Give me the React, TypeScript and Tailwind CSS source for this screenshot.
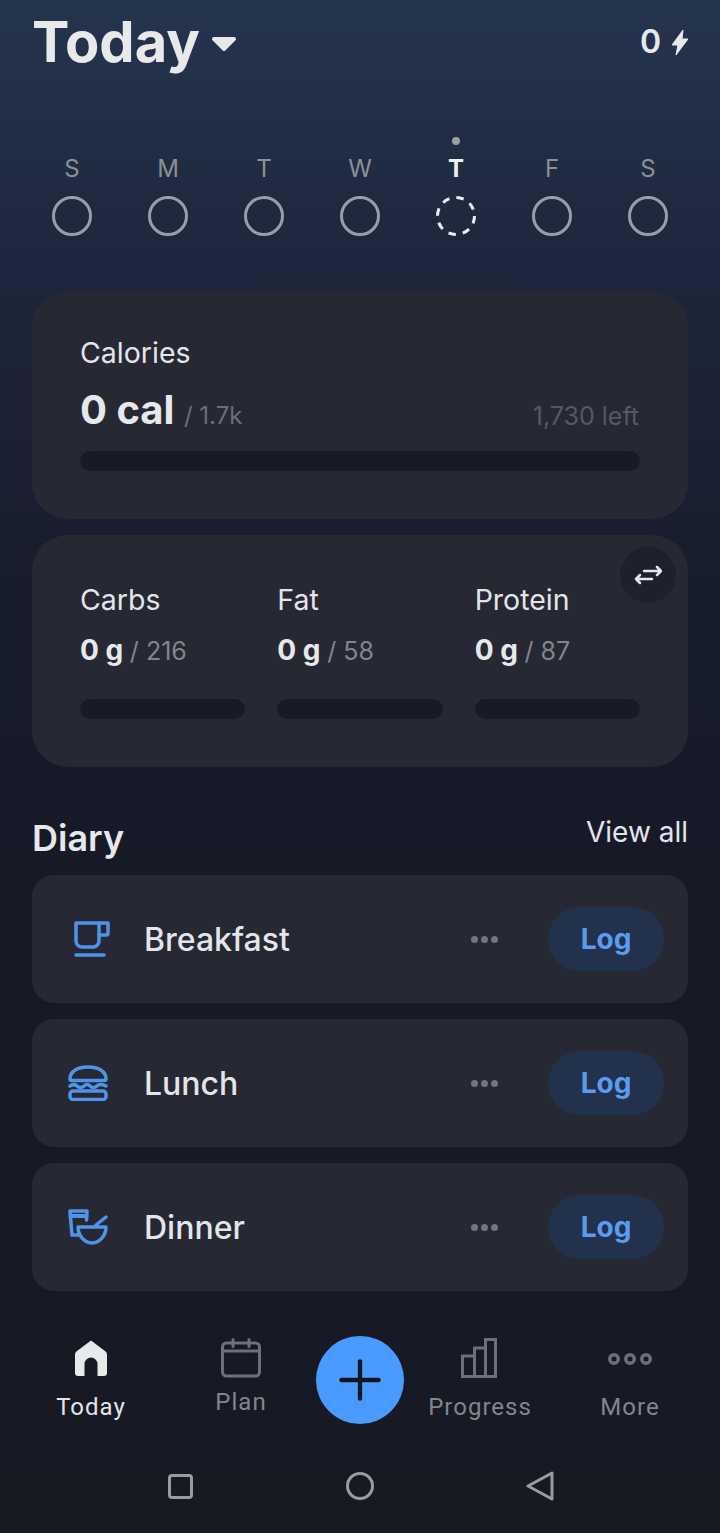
import { Plus } from "lucide-react"

const days = ["S", "M", "T", "W", "T", "F", "S"]
const macros = [
  { label: "Carbs", goal: "216" },
  { label: "Fat", goal: "58" },
  { label: "Protein", goal: "87" },
]

function CupIcon() {
  return (
    <svg width="36" height="36" viewBox="0 0 36 36" fill="none" stroke="#5094ea" strokeWidth="3.5" strokeLinecap="round" strokeLinejoin="round" className="ml-[6px]">
      <path d="M2 2H25V20a6 6 0 0 1-6 6H8a6 6 0 0 1-6-6Z" />
      <path d="M25 2h9V12a2 2 0 0 1-2 2h-7" />
      <path d="M2 34h28" />
    </svg>
  )
}

function BurgerIcon() {
  return (
    <svg width="40" height="36" viewBox="0 0 40 36" fill="none" stroke="#5094ea" strokeWidth="3.5" strokeLinecap="round" strokeLinejoin="round">
      <path d="M2 14C2 6 10 2 20 2S38 6 38 14c0 1-1 1.500-2 1.500H4c-1 0-2-.5-2-1.500Z" />
      <path d="M2 21c3-2 5-2 7 0s5 2 7 0 4-2 6 0 5 2 7 0 5-2 9 0" />
      <rect x="2" y="26" width="36" height="8.500" rx="3" />
    </svg>
  )
}

function DinnerIcon() {
  return (
    <svg width="40" height="36" viewBox="0 0 40 36" fill="none" stroke="#5094ea" strokeWidth="3.5" strokeLinecap="round" strokeLinejoin="round">
      <path d="M2 2H19l-.5 9M2 2l2 24h6" />
      <path d="M2.500 7h16" strokeWidth="4" />
      <path d="M10 18h28c0 9-7 16-14 16s-14-7-14-16Z" />
      <path d="M28 16l10-8" />
    </svg>
  )
}

function HomeIcon() {
  return (
    <svg width="34" height="36" viewBox="0 0 34 36" fill="#e8e9eb">
      <path d="M17 0.500 31 11a4 4 0 0 1 2 3.500V33a3 3 0 0 1-3 3h-6.500V24a6.500 6.500 0 0 0-13 0v12H4a3 3 0 0 1-3-3V14.500A4 4 0 0 1 3 11Z" />
    </svg>
  )
}

function CalendarIcon() {
  return (
    <svg width="40" height="40" viewBox="0 0 40 40" fill="none" stroke="#6e6f78" strokeWidth="3" strokeLinecap="round" strokeLinejoin="round">
      <rect x="1.500" y="5" width="37" height="33" rx="4" />
      <path d="M1.500 13h37M12 1.500v7M28 1.500v7" />
    </svg>
  )
}

function BarsIcon() {
  return (
    <svg width="36" height="40" viewBox="0 0 36 40" fill="none" stroke="#6e6f78" strokeWidth="3" className="-ml-[2px]">
      <path d="M1.500 38.500V18h12v20.500ZM13.500 38.500V10h11v28.500ZM24.500 38.500V1.500h10v37Z" />
    </svg>
  )
}

function MoreIcon() {
  return (
    <svg width="46" height="14" viewBox="0 0 46 14" fill="none" stroke="#6e6f78" strokeWidth="3.500" className="mt-[2px]">
      <circle cx="7" cy="7" r="4.250" />
      <circle cx="23" cy="7" r="4.250" />
      <circle cx="39" cy="7" r="4.250" />
    </svg>
  )
}

function DiaryRow({ label, icon }: { label: string; icon: React.ReactNode }) {
  return (
    <div className="flex h-[128px] items-center rounded-[22px] bg-[#262833] pl-9 pr-6">
      <div className="flex w-[77px] justify-start">{icon}</div>
      <span className="-ml-px mt-[2px] flex-1 text-[32px] font-medium text-[#e3e5ea]">{label}</span>
      <div className="mr-[50px] flex gap-[3px]">
        <span className="h-[7px] w-[7px] rounded-full bg-[#74757d]" />
        <span className="h-[7px] w-[7px] rounded-full bg-[#74757d]" />
        <span className="h-[7px] w-[7px] rounded-full bg-[#74757d]" />
      </div>
      <button className="flex h-16 w-[116px] items-center justify-center rounded-full bg-[#22324c] text-[28px] font-bold text-[#5b9bf0]">
        Log
      </button>
    </div>
  )
}

export default function App() {
  return (
    <div className="flex h-[1533px] w-[720px] flex-col overflow-hidden bg-[linear-gradient(180deg,#25344e_0%,#1c2538_20%,#171c2b_40%,#161926_60%,#171923_100%)] font-['Inter',sans-serif]">
      {/* Header */}
      <header className="flex h-[84px] items-center justify-between pl-8 pr-8">
        <div className="flex items-center gap-[12px]">
          <h1 className="text-[56px] font-bold leading-[60px] text-[#e8e9eb]">Today</h1>
          <svg width="24" height="14" viewBox="0 0 24 14" fill="#e8e9eb" className="mt-1">
            <path d="M2 0h20a2 2 0 0 1 1.500 3.300l-10 10a2 2 0 0 1-3 0l-10-10A2 2 0 0 1 2 0Z" />
          </svg>
        </div>
        <div className="flex items-center gap-[11px]">
          <span className="text-[32px] font-semibold text-[#e6e8ec]">0</span>
          <svg width="16" height="25" viewBox="0 0 16 25" fill="#e8e9eb">
            <path d="M11 0 0 15h6L4 25 16 9h-6Z" stroke="#e8e9eb" strokeWidth="1" strokeLinejoin="round" />
          </svg>
        </div>
      </header>

      {/* Week strip */}
      <div className="mt-[52px] grid grid-cols-7 px-6">
        {days.map((day, i) => (
          <div key={i} className="flex flex-col items-center">
            <div className="flex h-[10px] items-center">
              {i === 4 && <span className="h-[8px] w-[8px] rounded-full bg-[#9a9ea6]" />}
            </div>
            <span className={`mt-[8px] text-[24px] leading-[30px] ${i === 4 ? "font-bold text-[#eceef0]" : "text-[#8b8f98]"}`}>
              {day}
            </span>
            {i === 4 ? (
              <svg width="40" height="40" viewBox="0 0 40 40" fill="none" className="mt-[12px]">
                <circle cx="20" cy="20" r="18.500" stroke="#eceef0" strokeWidth="3" strokeDasharray="7.500 7" />
              </svg>
            ) : (
              <div className="mt-[12px] h-10 w-10 rounded-full border-[3px] border-[#9a9ea6]" />
            )}
          </div>
        ))}
      </div>

      <div className="mt-[55px] flex flex-col gap-4 px-8">
        {/* Calories */}
        <section className="h-[228px] rounded-[36px] bg-[#262833] px-12 pt-[45px]">
          <p className="text-[28.500px] leading-[34px] text-[#e3e5ea]">Calories</p>
          <div className="mt-[18px] flex items-baseline justify-between">
            <p className="text-[40px] font-bold leading-[44px] text-[#e6e8ec]">
              0 cal <span className="text-[24px] font-normal text-[#6b6e77]">/ 1.7k</span>
            </p>
            <span className="translate-y-[1px] pr-px text-[25px] text-[#565963]">1,730 left</span>
          </div>
          <div className="mt-[13px] h-5 rounded-full bg-[#181b26]" />
        </section>

        {/* Macros */}
        <section className="relative h-[232px] rounded-[36px] bg-[#262833] px-12 pt-[48px]">
          <button className="absolute right-3 top-3 flex h-14 w-14 items-center justify-center rounded-full bg-[#1e202b]">
            <svg width="28" height="20" viewBox="0 0 28 20" fill="none" stroke="#e6e8ec" strokeWidth="2.500" strokeLinecap="round" strokeLinejoin="round">
              <path d="M10 6h17M23 2l4 4-4 4" />
              <path d="M18 14H2M6 10l-4 4 4 4" />
            </svg>
          </button>
          <div className="grid grid-cols-3 gap-8">
            {macros.map((m) => (
              <div key={m.label}>
                <p className="text-[28.500px] leading-[34px] text-[#e3e5ea]">{m.label}</p>
                <p className="mt-[15px] text-[28px] font-bold leading-[36px] text-[#e6e8ec]">
                  0 g <span className="text-[25px] font-normal text-[#82858d]">/ {m.goal}</span>
                </p>
                <div className="mt-[30px] h-5 rounded-full bg-[#181b26]" />
              </div>
            ))}
          </div>
        </section>

        {/* Diary */}
        <div className="mt-[32px] flex items-start justify-between">
          <h2 className="mt-[1px] text-[36px] font-semibold leading-[44px] text-[#e6e8ec]">Diary</h2>
          <span className="text-[28px] leading-[34px] text-[#e3e5ea]">View all</span>
        </div>
        <div className="-mt-[1px] flex flex-col gap-4">
          <DiaryRow label="Breakfast" icon={<CupIcon />} />
          <DiaryRow label="Lunch" icon={<BurgerIcon />} />
          <DiaryRow label="Dinner" icon={<DinnerIcon />} />
        </div>
      </div>

      {/* Bottom tabs */}
      <nav className="relative mt-[47px] grid grid-cols-[182px_118px_120px_120px_180px] font-['Roboto',sans-serif] text-[24px] tracking-[1px]">
        <div className="flex flex-col items-center text-[#e3e5ea]">
          <div className="flex h-10 items-center"><HomeIcon /></div>
          <span className="mt-[14px] leading-[30px]">Today</span>
        </div>
        <div className="flex flex-col items-center text-[#82858d]">
          <div className="flex h-10 items-center"><CalendarIcon /></div>
          <span className="mt-[9px] leading-[30px]">Plan</span>
        </div>
        <div className="flex justify-center">
          <div className="-mt-[2px] flex h-[88px] w-[88px] shrink-0 items-center justify-center rounded-full bg-[#4a9bff]">
            <Plus size={64} strokeWidth={1.600} className="text-[#10151f]" />
          </div>
        </div>
        <div className="flex flex-col items-center text-[#82858d]">
          <div className="flex h-10 items-center"><BarsIcon /></div>
          <span className="mt-[14px] leading-[30px]">Progress</span>
        </div>
        <div className="flex flex-col items-center text-[#82858d]">
          <div className="flex h-10 items-center"><MoreIcon /></div>
          <span className="mt-[14px] leading-[30px]">More</span>
        </div>
      </nav>

      {/* Android system bar */}
      <div className="mt-[47px] grid grid-cols-3 justify-items-center px-[90px]">
        <div className="h-[25px] w-[25px] self-center rounded-[4px] border-[3px] border-[#9a9ca3]" />
        <div className="h-[28px] w-[28px] self-center rounded-full border-[3px] border-[#9a9ca3]" />
        <svg width="28" height="30" viewBox="0 0 28 30" fill="none" stroke="#9a9ca3" strokeWidth="3" strokeLinejoin="round">
          <path d="M26 2v26L2 15Z" />
        </svg>
      </div>
    </div>
  )
}
